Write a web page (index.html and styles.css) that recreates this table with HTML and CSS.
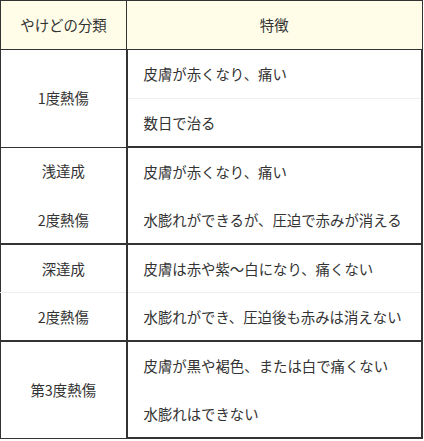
FILE: index.html
```html
<!DOCTYPE html>
<html lang="ja">
<head>
<meta charset="utf-8">
<link rel="stylesheet" href="styles.css">
</head>
<body>
<table class="burns">
  <thead>
    <tr><th class="col-class">やけどの分類</th><th class="col-feat">特徴</th></tr>
  </thead>
  <tbody>
    <tr class="sub-a first"><td class="name" rowspan="2">1度熱傷</td><td class="feat split">皮膚が赤くなり、痛い</td></tr>
    <tr class="sub-b"><td class="feat">数日で治る</td></tr>
    <tr class="sub-a"><td class="name top">浅達成</td><td class="feat">皮膚が赤くなり、痛い</td></tr>
    <tr class="sub-b"><td class="name bottom">2度熱傷</td><td class="feat">水膨れができるが、圧迫で赤みが消える</td></tr>
    <tr class="sub-a"><td class="name top split">深達成</td><td class="feat split">皮膚は赤や紫～白になり、痛くない</td></tr>
    <tr class="sub-b"><td class="name bottom">2度熱傷</td><td class="feat">水膨れができ、圧迫後も赤みは消えない</td></tr>
    <tr class="sub-a"><td class="name" rowspan="2">第3度熱傷</td><td class="feat">皮膚が黒や褐色、または白で痛くない</td></tr>
    <tr class="sub-b"><td class="feat">水膨れはできない</td></tr>
  </tbody>
</table>
</body>
</html>
```
FILE: styles.css
```css
html, body {
  margin: 0;
  padding: 0;
  background: #fff;
}
.burns {
  width: 423px;
  border-collapse: collapse;
  font-family: "Noto Sans CJK JP", "Noto Sans", sans-serif;
  font-size: 14.4px;
  color: #333;
  table-layout: fixed;
}
.burns th,
.burns td {
  border: 1px solid #333;
  padding: 0;
  line-height: 20px;
}
.burns th {
  background: #fffde8;
  font-weight: normal;
  height: 48px;
  text-align: center;
}
.col-class { width: 125px; }
.burns td { height: 47px; }
.burns tr.first td { height: 48px; }
.burns tr.sub-b td { height: 47px; }
.burns td.name {
  text-align: center;
  border-left-width: 1px;
  border-right-width: 2px;
}
.burns td.feat {
  text-align: left;
  padding-left: 16px;
  border-right-width: 2px;
}
.burns tr.sub-a td.feat,
.burns tr.sub-a td.top {
  border-bottom: 1px solid transparent;
}
.burns tr.sub-b td.feat,
.burns tr.sub-b td.bottom {
  border-top: 1px solid transparent;
}
.burns tr.sub-a td.split {
  border-bottom: 1px solid #eeeeee;
}
.burns tr.sub-b td {
  border-bottom: 2px solid #333;
}
```
